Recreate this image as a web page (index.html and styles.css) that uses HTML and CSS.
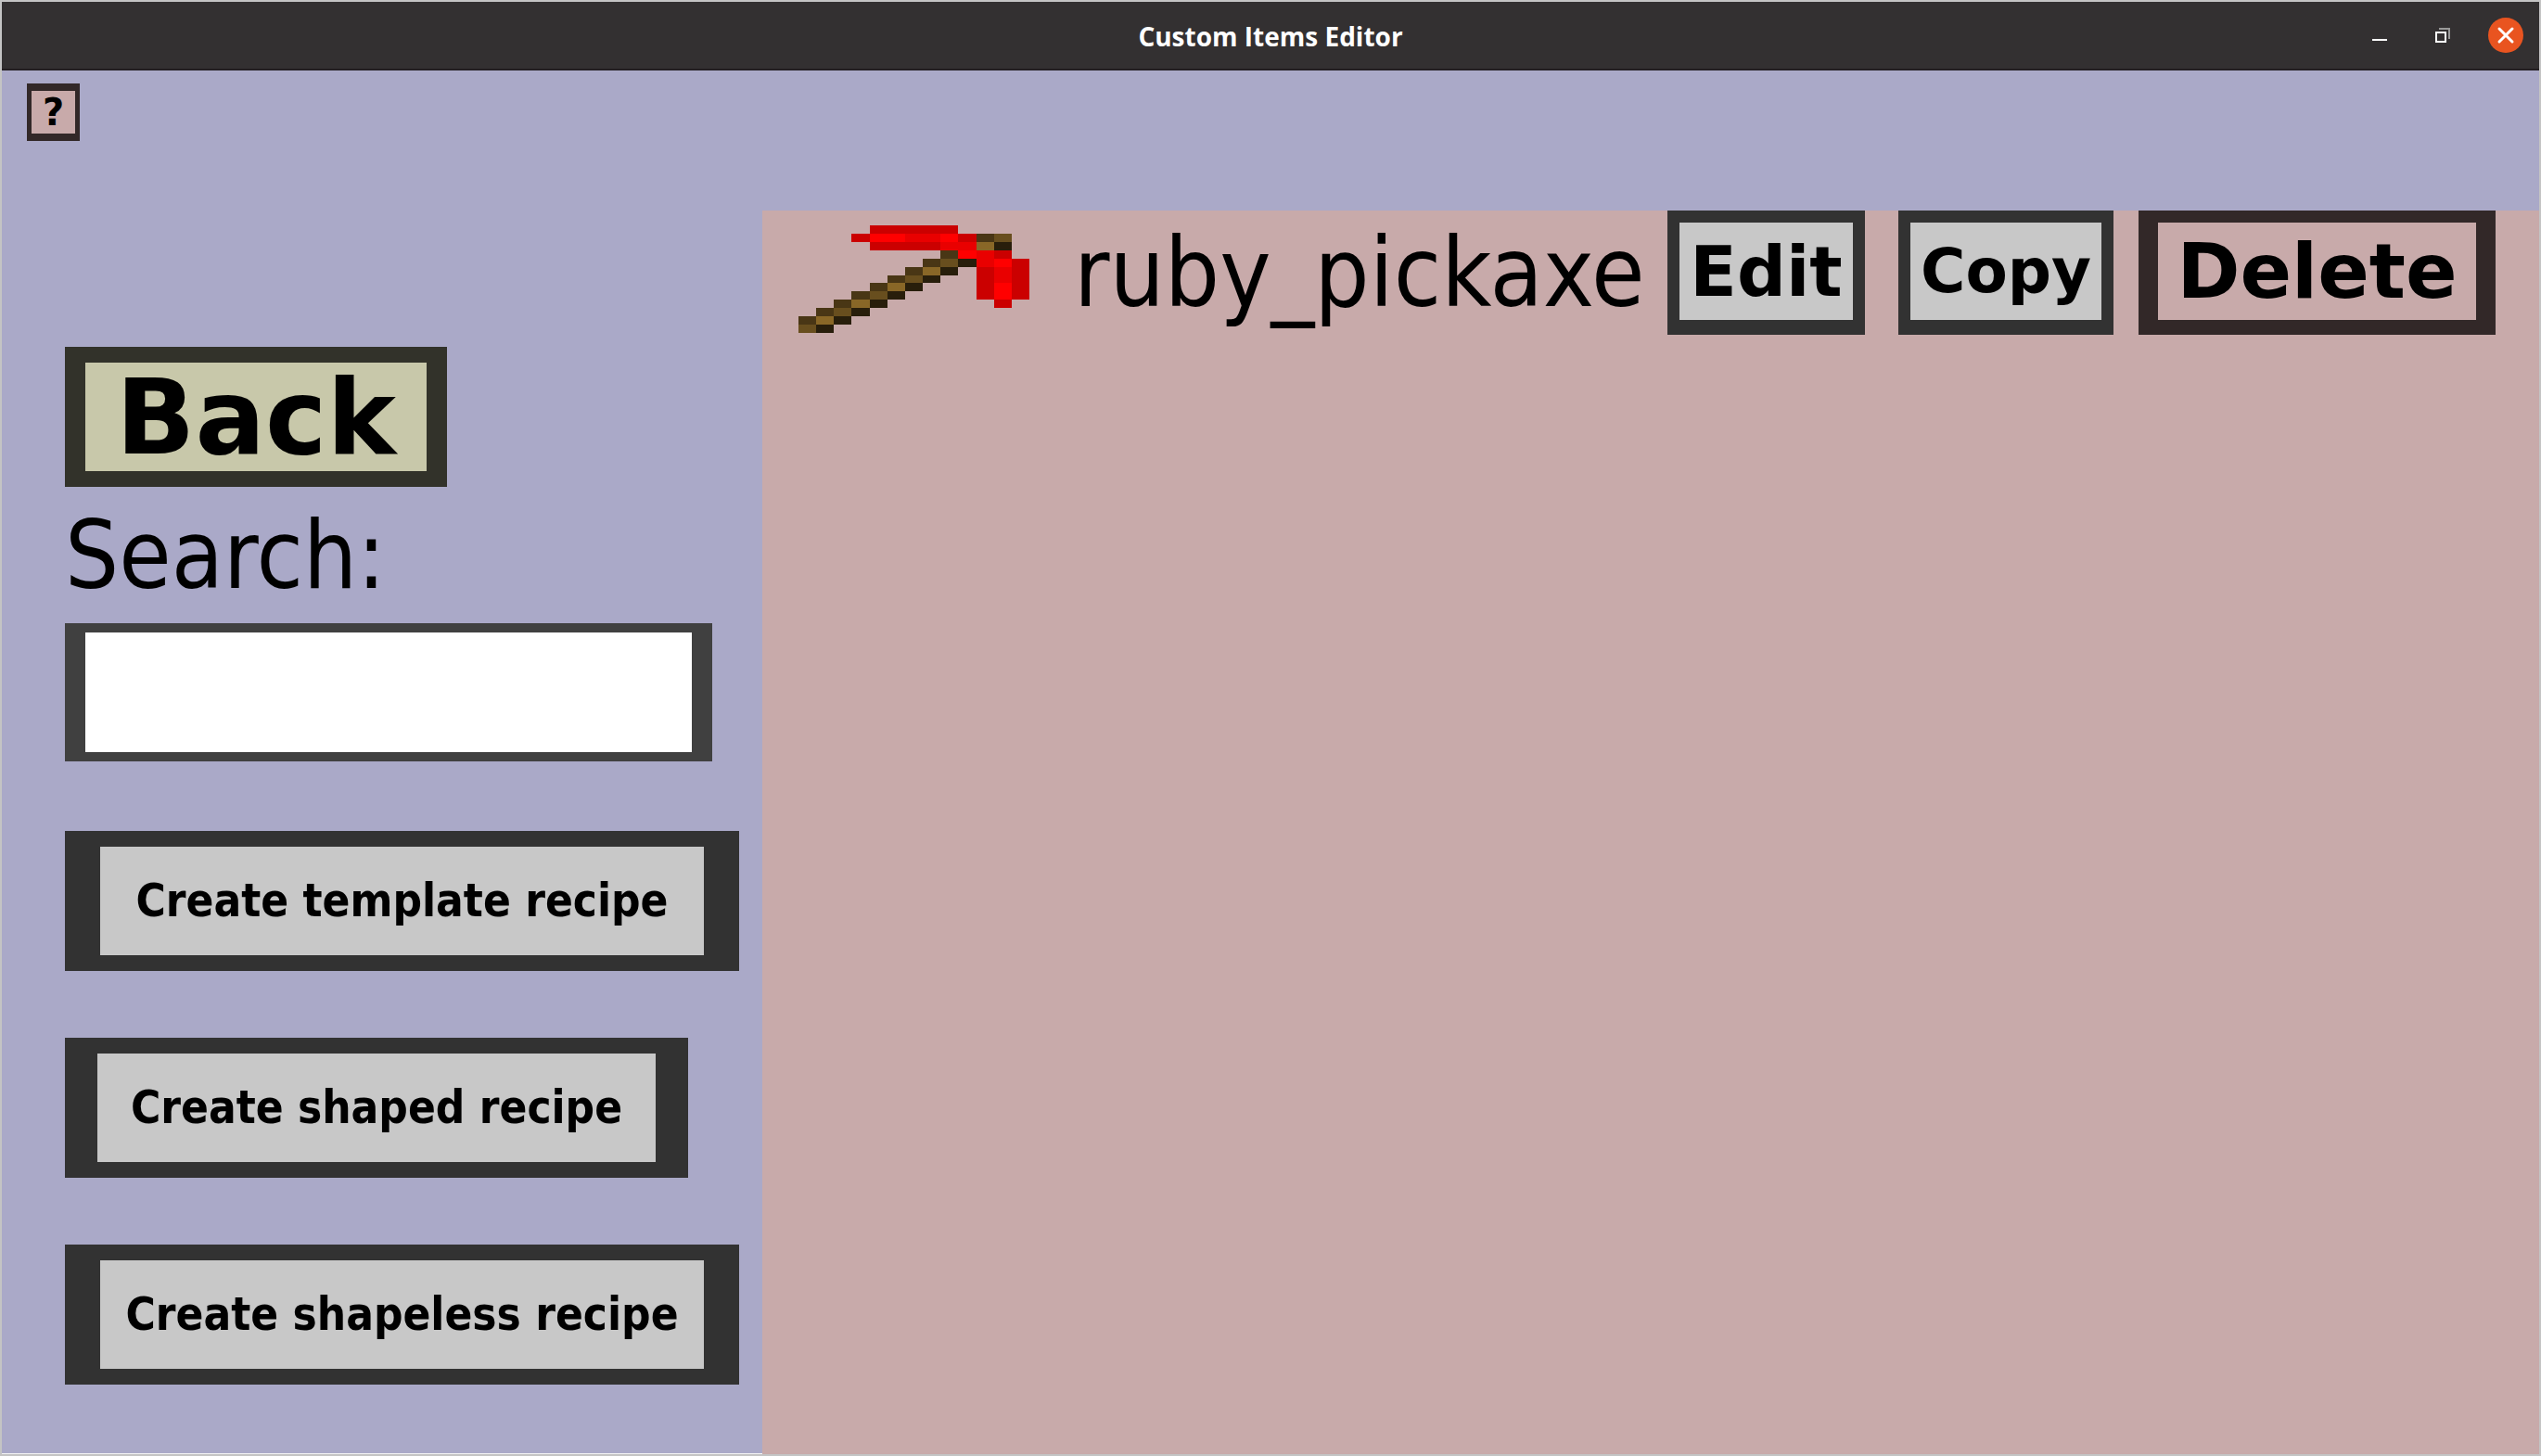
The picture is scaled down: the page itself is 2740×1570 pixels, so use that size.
FILE: index.html
```html
<!DOCTYPE html>
<html lang="en">
<head>
<meta charset="utf-8">
<meta name="viewport" content="width=device-width, initial-scale=1">
<title>Custom Items Editor</title>
<link rel="stylesheet" href="styles.css">
</head>
<body>
<div class="window">
  <header class="titlebar">
    <h1 class="title">Custom Items Editor</h1>
    <div class="controls">
      <button class="control" type="button" aria-label="Minimize">
        <svg width="38" height="38" viewBox="0 0 38 38"><path d="M11 23h16v2H11z" fill="#fff"/></svg>
      </button>
      <button class="control" type="button" aria-label="Restore">
        <svg width="38" height="38" viewBox="0 0 38 38"><path d="M15 11h12v12h-2V13H15z" fill="#999"/><path d="M12 16h10v10H12z" fill="none" stroke="#fff" stroke-width="2"/></svg>
      </button>
      <button class="control" type="button" aria-label="Close">
        <svg width="38" height="38" viewBox="0 0 38 38"><circle cx="19" cy="19" r="19" fill="#e95420"/><path d="M12 12l14 14M26 12L12 26" stroke="#fff" stroke-width="3" stroke-linecap="round"/></svg>
      </button>
    </div>
  </header>
  <div class="toolbar">
    <button class="btn btn-help" type="button">?</button>
  </div>
  <main class="content">
    <aside class="sidebar">
      <button class="btn btn-back" type="button">Back</button>
      <label class="search-label" for="search">Search:</label>
      <input class="search" id="search" type="text">
      <div class="create-list">
        <button class="btn btn-create" type="button">Create template recipe</button>
        <button class="btn btn-create btn-create-short" type="button">Create shaped recipe</button>
        <button class="btn btn-create" type="button">Create shapeless recipe</button>
      </div>
    </aside>
    <section class="items">
      <div class="item">
        <svg class="item-icon" viewBox="0 0 13 13" preserveAspectRatio="none" shape-rendering="crispEdges" aria-hidden="true">
          <path fill="#cb0000" d="M4 0h5v1H4zM3 1h1v1H3zM4 2h4v1H4zM9 1h1v1H9zM11 3h1v1h-1zM10 5h1v4h-1zM12 4h1v5h-1zM11 9h1v1h-1z"/>
          <path fill="#e90000" d="M6 1h2v1H6zM8 2h2v1H8zM10 3h1v2h-1zM11 5h1v2h-1z"/>
          <path fill="#ff0000" d="M4 1h2v1H4zM8 1h1v1H8zM9 3h1v1H9zM11 4h1v1h-1zM11 7h1v2h-1z"/>
          <path fill="#493615" d="M10 1h1v1h-1zM8 3h1v1H8zM7 4h1v1H7zM6 5h1v1H6zM5 6h1v1H5zM4 7h1v1H4zM3 8h1v1H3zM2 9h1v1H2zM1 10h1v1H1zM0 11h1v1H0z"/>
          <path fill="#684e1e" d="M11 1h1v1h-1zM8 4h1v1H8zM6 6h1v1H6zM4 8h1v1H4zM2 10h1v1H2zM0 12h1v1H0z"/>
          <path fill="#896727" d="M10 2h1v1h-1zM7 5h1v1H7zM5 7h1v1H5zM3 9h1v1H3zM1 11h1v1H1z"/>
          <path fill="#281e0b" d="M11 2h1v1h-1zM9 4h1v1H9zM8 5h1v1H8zM7 6h1v1H7zM6 7h1v1H6zM5 8h1v1H5zM4 9h1v1H4zM3 10h1v1H3zM2 11h1v1H2zM1 12h1v1H1z"/>
        </svg>
        <span class="item-name">ruby_pickaxe</span>
        <div class="item-actions">
          <button class="btn btn-edit" type="button">Edit</button>
          <button class="btn btn-copy" type="button">Copy</button>
          <button class="btn btn-delete" type="button">Delete</button>
        </div>
      </div>
    </section>
  </main>
</div>
</body>
</html>
```

FILE: styles.css
```css
* {
  box-sizing: border-box;
}

body {
  margin: 0;
  background: #c4c4c4;
  color: #000;
  font-family: "DejaVu Sans", sans-serif;
}

.window {
  display: flex;
  flex-direction: column;
  min-height: 100vh;
  border: 2px solid #c4c4c4;
  background: #aaa9c8;
}

/* Title bar */
.titlebar {
  display: grid;
  grid-template-columns: 1fr auto 1fr;
  align-items: center;
  height: 74px;
  padding-right: 17px;
  border-bottom: 2px solid #231f22;
  background: #333031;
}

.title {
  grid-column: 2;
  margin: 0;
  padding: 2px 0 0 17px;
  color: #fff;
  font: bold 28px/36px "Open Sans", sans-serif;
}

.controls {
  display: flex;
  justify-content: flex-end;
  gap: 30px;
}

.control {
  width: 38px;
  height: 38px;
  padding: 0;
  border: 0;
  background: none;
}

.control svg {
  display: block;
}

/* Buttons */
.btn {
  padding: 0;
  border: 0 solid #323232;
  background: #c8c8c8;
  color: #000;
  font-family: "DejaVu Sans", sans-serif;
  font-weight: bold;
  line-height: 1;
  white-space: nowrap;
}

.toolbar {
  height: 151px;
  padding: 14px 27px;
}

.btn-help {
  width: 57px;
  height: 62px;
  border-width: 8px 5px;
  border-color: #322828;
  background: #c8aaaa;
  font-size: 40px;
}

.content {
  display: grid;
  grid-template-columns: 820fr 1916fr;
  flex: 1;
}

/* Sidebar */
.sidebar {
  display: flex;
  flex-direction: column;
  align-items: flex-start;
  padding: 147px 22px 72px 68px;
  border-bottom: 1px solid #f4f4f4;
}

.btn-back {
  width: 412px;
  height: 151px;
  border-width: 17px 22px;
  border-color: #32322a;
  background: #c8c8aa;
  font-size: 112px;
}

.search-label {
  font-family: "DejaVu Sans Condensed", "DejaVu Sans", sans-serif;
  font-size: 102px;
  line-height: 147px;
}

.search {
  width: 698px;
  height: 149px;
  padding: 0 12px;
  border: solid #404040;
  border-width: 10px 22px;
  outline: 0;
  border-radius: 0;
  background: #fff;
  font: 80px "DejaVu Sans Condensed", "DejaVu Sans", sans-serif;
}

.create-list {
  display: flex;
  flex-direction: column;
  gap: 72px;
  margin-top: 75px;
}

.btn-create {
  width: 727px;
  height: 151px;
  border-width: 17px 38px;
  font-family: "DejaVu Sans Condensed", "DejaVu Sans", sans-serif;
  font-size: 49px;
}

.btn-create-short {
  width: 672px;
  border-width: 17px 35px;
}

/* Item list */
.items {
  background: #c8aaaa;
}

.item {
  display: flex;
  align-items: center;
  height: 134px;
  padding: 0 47px 0 39px;
}

.item-icon {
  align-self: flex-end;
  width: 249px;
  height: 116px;
  margin-bottom: 2px;
}

.item-name {
  margin-left: 48px;
  font-family: "DejaVu Sans Condensed", "DejaVu Sans", sans-serif;
  font-size: 104px;
  line-height: 134px;
}

.item-actions {
  display: flex;
  margin-left: auto;
}

.item-actions .btn {
  height: 134px;
  border-width: 13px 13px 16px;
}

.item-actions .btn-edit {
  width: 213px;
  font-size: 74px;
}

.item-actions .btn-copy {
  width: 232px;
  margin-left: 36px;
  font-size: 66px;
}

.item-actions .btn-delete {
  width: 385px;
  margin-left: 27px;
  border-width: 13px 21px 16px;
  border-color: #322828;
  background: #c8aaaa;
  font-size: 82px;
}
```
